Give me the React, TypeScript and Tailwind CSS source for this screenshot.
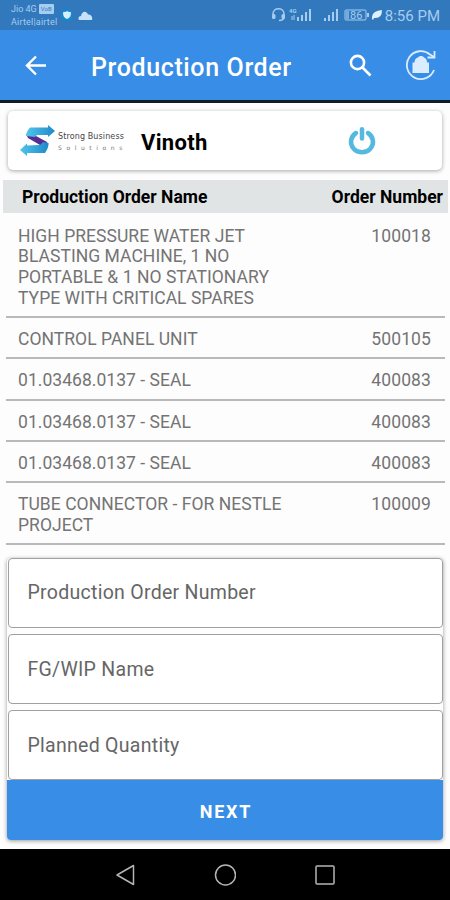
const orders = [
  {
    name: 'HIGH PRESSURE WATER JET BLASTING MACHINE, 1 NO PORTABLE & 1 NO STATIONARY TYPE WITH CRITICAL SPARES',
    number: '100018'
  },
  { name: 'CONTROL PANEL UNIT', number: '500105' },
  { name: '01.03468.0137 - SEAL', number: '400083' },
  { name: '01.03468.0137 - SEAL', number: '400083' },
  { name: '01.03468.0137 - SEAL', number: '400083' },
  { name: 'TUBE CONNECTOR - FOR NESTLE PROJECT', number: '100009' }
]

const fields = ['Production Order Number', 'FG/WIP Name', 'Planned Quantity']

const StatusBar = () => (
  <div className="flex h-[30px] items-center bg-[#3278bd] text-[#a5cdf0]">
    <div className="ml-[11px] w-[48px] pt-px text-[9px] leading-[13px]">
      <div className="flex items-center gap-[2px]">
        <span className="whitespace-nowrap">Jio 4G</span>
        <span className="h-[10px] w-[15px] shrink-0 rounded-[1px] bg-[#a5cdf0] text-center text-[6px] leading-[10px] text-[#3278bd]">
          VoB
        </span>
      </div>
      <div className="tracking-[0.2px] whitespace-nowrap">Airtel|airtel</div>
    </div>
    <svg className="ml-[2px] h-[12px] w-[12px]" viewBox="0 0 12 12">
      <circle cx="6" cy="6" r="6" fill="#1787d0" />
      <path
        d="M6 2C7 3 9 3 10 3.200C10 7 9 9 6 10C3 9 2 7 2 3.200C4 3 5 3 6 2Z"
        fill="#d5efff"
      />
    </svg>
    <svg className="ml-[5px] h-[9px] w-[15px]" viewBox="0 0 15 9">
      <path
        d="M1 9C-.5 6.500 1.500 5 3 5C3.500 0 8.500 -1 10 3.500C13 3 15 6 14 9Z"
        fill="#c5e2fa"
      />
    </svg>
    <svg
      className="ml-auto h-[18px] w-[104px]"
      viewBox="0 0 104 18"
      fill="currentColor"
    >
      <path
        d="M2 9V8C2 1 13 1 13 8V12Q12 14.500 8 14.500"
        fill="none"
        stroke="currentColor"
        strokeWidth="1.500"
      />
      <rect x="1" y="8" width="3.500" height="5" rx="1.500" />
      <rect x="10.500" y="8" width="3.500" height="5" rx="1.500" />
      <text x="18" y="7" fontSize="6" fontWeight="700">
        4G
      </text>
      <path d="M21 10V14M23 14V9" stroke="currentColor" strokeWidth="1" />
      <path d="M26 11h2v4h-2zM30 9h2v6h-2zM34 6h2v9h-2zM38 3h2v12h-2z" />
      <path d="M53 12h2v3h-2zM57 9h2v6h-2zM61 6h2v9h-2zM65 3h2v12h-2z" />
      <rect
        x="74"
        y="4"
        width="21"
        height="10"
        rx="1"
        fill="none"
        stroke="currentColor"
      />
      <rect x="75" y="5" width="3" height="8" opacity=".6" />
      <rect x="96" y="7" width="2" height="4" />
      <text x="79" y="13" fontSize="11">
        86
      </text>
    </svg>
    <svg className="-ml-[3px] h-[10px] w-[10px]" viewBox="0 0 10 10">
      <path d="M0 9Q-1 1 10 0Q10 9 2 8L1 10Z" fill="#dcf0ff" />
    </svg>
    <span className="mr-[10px] ml-[3px] pt-[3px] text-[15px] leading-none">
      8:56 PM
    </span>
  </div>
)

const AppBar = () => (
  <div className="flex h-[73px] items-center border-b-[3px] border-[#101c28] bg-[#388de6] text-white">
    <svg
      className="ml-[25px] h-[22px] w-[22px]"
      viewBox="0 0 22 22"
      fill="none"
      stroke="currentColor"
      strokeWidth="2.400"
    >
      <path d="M21 11.500H3M11 2.500L2 11.500L11 20.500" />
    </svg>
    <h1 className="ml-[44px] pt-[5px] text-[25px] leading-none font-medium tracking-[0.62px] whitespace-nowrap">
      Production Order
    </h1>
    <svg
      className="mr-[33px] ml-auto h-[23px] w-[23px]"
      viewBox="0 0 23 23"
      fill="none"
      stroke="currentColor"
      strokeWidth="2.600"
    >
      <circle cx="8.500" cy="8.500" r="6.600" />
      <path d="M13.500 13.500L21.500 21.500" />
    </svg>
    <svg
      className="mr-[13px] h-[32px] w-[32px] text-[#d9edff]"
      viewBox="0 0 32 32"
      fill="none"
      stroke="currentColor"
      strokeWidth="1.800"
    >
      <path d="M29 21A14 14 0 1 1 25 5.500L29 8" />
      <path d="M29.500 2V8.500H22.500" />
      <path
        d="M7.500 24V13.500H9.500C9.500 10.500 11 9 13 8.500C14 6.500 18 6.500 19 8.500C21 9 22 11 22 13.500H24V24Z"
        fill="currentColor"
        stroke="none"
      />
    </svg>
  </div>
)

const Logo = () => (
  <svg className="h-[31px] w-[35px]" viewBox="0 0 35 31">
    <defs>
      <linearGradient id="ribbon" x1="0" y1="0" x2="1" y2="0">
        <stop offset="0" stopColor="#4fc6ec" />
        <stop offset="1" stopColor="#2089c8" />
      </linearGradient>
    </defs>
    <path d="M6 9L16 11L27 17L28 21L22 24L20 20L8 13Z" fill="#582d91" />
    <path
      d="M10 2.500H28V0L35 6L28 12V10H17L15 12L6 11Q6 8 8 5Z"
      fill="url(#ribbon)"
    />
    <path
      d="M20 20L23 17L28.500 18Q29 22 25 28H7V31L0 25L7 18.500V20.500Z"
      fill="url(#ribbon)"
    />
  </svg>
)

const UserCard = () => (
  <div className="mx-2 flex h-[59px] items-center rounded-[5px] bg-white shadow-[0_1px_4px_rgba(0,0,0,0.35)]">
    <div className="ml-[12px]">
      <Logo />
    </div>
    <div className="ml-[3px] w-[68px] pt-[3px] font-['DejaVu_Sans',sans-serif] whitespace-nowrap text-[#454545]">
      <div className="text-[8px] leading-[9px] tracking-[0.12px]">
        Strong Business
      </div>
      <div className="mt-[3px] text-[6px] leading-[8px] tracking-[4.600px] text-[#777]">
        Solutions
      </div>
    </div>
    <span className="ml-[15px] pt-[5px] text-[22px] leading-none font-bold tracking-[0.3px] text-black">
      Vinoth
    </span>
    <svg
      className="mr-[66px] ml-auto h-[28px] w-[28px]"
      viewBox="0 0 28 28"
      fill="none"
      stroke="#55b9df"
      strokeWidth="4.500"
      strokeLinecap="round"
    >
      <path d="M8 6A11 10.500 0 1 0 20 6" />
      <path d="M14 2.250V11.500" />
    </svg>
  </div>
)

const OrderTable = () => (
  <div>
    <div className="mr-[2px] ml-[3px] flex h-[33px] items-center justify-between bg-[#e1e4e5] pt-[2px] pr-[5px] pl-[19px] text-[17.5px] font-bold text-black">
      <span>Production Order Name</span>
      <span>Order Number</span>
    </div>
    <div className="mr-[5px] ml-[6px] pt-[2px] text-[17.5px] leading-[20.65px] text-[#747474]">
      {orders.map((order, i) => (
        <div
          key={i}
          className="flex justify-between border-b-2 border-[#b9b9b9] pt-[10.8px] pr-[14px] pb-[7.8px] pl-[12px]"
        >
          <span className="w-[270px] tracking-[0.04px]">{order.name}</span>
          <span className="tracking-[0.12px]">{order.number}</span>
        </div>
      ))}
    </div>
  </div>
)

const OrderForm = () => (
  <div className="mx-[7px] mt-[12.4px] rounded-[4px] shadow-[0_1px_4px_rgba(0,0,0,0.4)]">
    <div className="flex flex-col gap-[6px]">
      {fields.map((field) => (
        <div
          key={field}
          className="ml-[1px] flex h-[70.2px] items-center rounded-[4px] border border-[#a0a0a0] bg-white pt-[1px] pl-[18.5px] text-[19.5px] tracking-[0.28px] text-[#666]"
        >
          {field}
        </div>
      ))}
    </div>
    <button className="flex h-[60px] w-full items-center justify-center rounded-b-[4px] bg-[#388de6] pt-[2px] pl-[2px] text-[18px] font-bold tracking-[1.8px] text-white">
      NEXT
    </button>
  </div>
)

const NavBar = () => (
  <div className="mt-auto flex h-[51px] items-center justify-center gap-[78px] bg-black">
    <svg
      className="h-[22px] w-[22px]"
      viewBox="0 0 22 22"
      fill="none"
      stroke="#b5b5b5"
      strokeWidth="1.500"
      strokeLinejoin="round"
    >
      <path d="M19.500 1.500V20.500L3 11Z" />
    </svg>
    <svg
      className="h-[22px] w-[22px]"
      viewBox="0 0 22 22"
      fill="none"
      stroke="#b5b5b5"
      strokeWidth="1.500"
    >
      <circle cx="11.500" cy="11" r="10" />
    </svg>
    <svg
      className="h-[22px] w-[22px]"
      viewBox="0 0 22 22"
      fill="none"
      stroke="#b5b5b5"
      strokeWidth="1.500"
    >
      <rect x="2" y="2" width="18" height="18" rx="1" />
    </svg>
  </div>
)

const App = () => (
  <div className="flex h-[900px] w-[450px] flex-col overflow-hidden bg-[#fdfdfd] font-[Roboto,sans-serif]">
    <StatusBar />
    <AppBar />
    <div className="mt-[8px] mb-[10px]">
      <UserCard />
    </div>
    <OrderTable />
    <OrderForm />
    <NavBar />
  </div>
)

export default App
